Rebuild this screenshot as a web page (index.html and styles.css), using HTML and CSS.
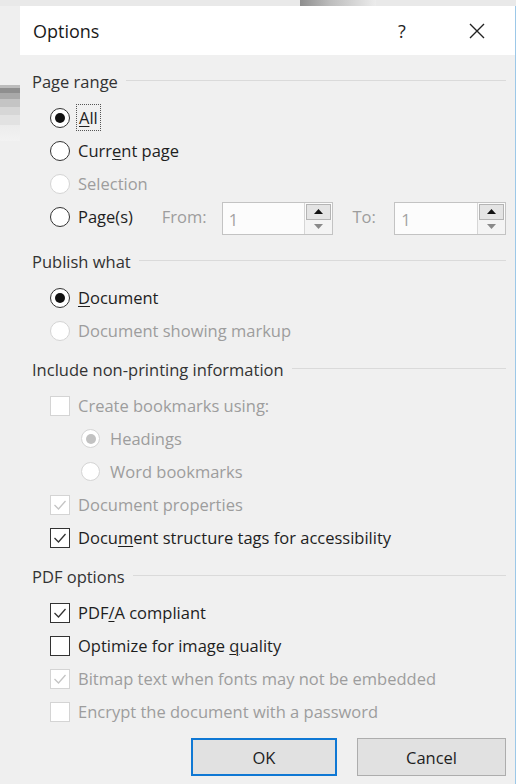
FILE: index.html
```html
<!DOCTYPE html>
<html lang="en">
<head>
<meta charset="utf-8">
<title>Options</title>
<link rel="stylesheet" href="styles.css">
</head>
<body>
<div class="desk">
  <div class="topstrip"></div>
  <div class="stage">
    <div class="gutter"></div>
    <div class="dialog">
      <div class="titlebar">
        <span class="title">Options</span>
        <span class="help">?</span>
        <span class="close">
          <svg width="18" height="18" viewBox="0 0 18 18"><path d="M2 2 L16 16 M16 2 L2 16" stroke="#222" stroke-width="1.4" fill="none"/></svg>
        </span>
      </div>

      <div class="content">
        <section class="group">
          <div class="group-head">Page range</div>
          <div class="opt"><span class="radio on"></span><span class="focus"><u>A</u>ll</span></div>
          <div class="opt"><span class="radio"></span><span>Curr<u>e</u>nt page</span></div>
          <div class="opt off"><span class="radio"></span><span>Selection</span></div>
          <div class="opt pages">
            <span class="radio"></span>
            <span class="pages-label">Pa<u>g</u>e(s)</span>
            <span class="field-label from">From:</span>
            <span class="spin">
              <span class="spin-value">1</span>
              <span class="spin-btns">
                <span class="spin-up"><svg width="9" height="5" viewBox="0 0 9 5"><path d="M0 5 L4.5 0 L9 5 Z" fill="#111"/></svg></span>
                <span class="spin-down"><svg width="9" height="5" viewBox="0 0 9 5"><path d="M0 0 L4.5 5 L9 0 Z" fill="#8a8a8a"/></svg></span>
              </span>
            </span>
            <span class="field-label to">To:</span>
            <span class="spin">
              <span class="spin-value">1</span>
              <span class="spin-btns">
                <span class="spin-up"><svg width="9" height="5" viewBox="0 0 9 5"><path d="M0 5 L4.5 0 L9 5 Z" fill="#111"/></svg></span>
                <span class="spin-down"><svg width="9" height="5" viewBox="0 0 9 5"><path d="M0 0 L4.5 5 L9 0 Z" fill="#8a8a8a"/></svg></span>
              </span>
            </span>
          </div>
        </section>

        <section class="group">
          <div class="group-head">Publish what</div>
          <div class="opt"><span class="radio on"></span><span><u>D</u>ocument</span></div>
          <div class="opt off"><span class="radio"></span><span>Document showing markup</span></div>
        </section>

        <section class="group">
          <div class="group-head">Include non-printing information</div>
          <div class="opt off"><span class="check"></span><span>Create bookmarks using:</span></div>
          <div class="opt sub off"><span class="radio on"></span><span>Headings</span></div>
          <div class="opt sub off"><span class="radio"></span><span>Word bookmarks</span></div>
          <div class="opt off"><span class="check on"><svg width="14" height="12" viewBox="0 0 14 12"><path d="M1.5 6 L5.5 10 L12.5 2" stroke="currentColor" stroke-width="1.3" fill="none"/></svg></span><span>Document properties</span></div>
          <div class="opt"><span class="check on"><svg width="14" height="12" viewBox="0 0 14 12"><path d="M1.5 6 L5.5 10 L12.5 2" stroke="currentColor" stroke-width="1.3" fill="none"/></svg></span><span>Docu<u>m</u>ent structure tags for accessibility</span></div>
        </section>

        <section class="group">
          <div class="group-head">PDF options</div>
          <div class="opt"><span class="check on"><svg width="14" height="12" viewBox="0 0 14 12"><path d="M1.5 6 L5.5 10 L12.5 2" stroke="currentColor" stroke-width="1.3" fill="none"/></svg></span><span>PDF<u>/</u>A compliant</span></div>
          <div class="opt"><span class="check"></span><span>Optimize for image <u>q</u>uality</span></div>
          <div class="opt off"><span class="check on"><svg width="14" height="12" viewBox="0 0 14 12"><path d="M1.5 6 L5.5 10 L12.5 2" stroke="currentColor" stroke-width="1.3" fill="none"/></svg></span><span>Bitmap text when fonts may not be embedded</span></div>
          <div class="opt off"><span class="check"></span><span>Encrypt the document with a password</span></div>
        </section>

        <div class="actions">
          <button class="btn default" type="button">OK</button>
          <button class="btn" type="button">Cancel</button>
        </div>
      </div>
    </div>
  </div>
</div>
</body>
</html>
```

FILE: styles.css
```css
html, body {
  margin: 0;
  padding: 0;
}

body {
  width: 516px;
  height: 784px;
  overflow: hidden;
  background: #ededed;
  font-family: "Open Sans", "Noto Sans", sans-serif;
  font-size: 16.5px;
  color: #1e1e1e;
}

/* desktop behind the dialog */
.topstrip {
  height: 6px;
  background:
    linear-gradient(to right, #8e8e8e, #bdbdbd 40%, #ececec) 300px 0 / 76px 100% no-repeat,
    #e9e9e9;
}

.stage {
  display: flex;
}

.gutter {
  width: 20px;
  flex: none;
  background:
    linear-gradient(to bottom,
      #bcbcbc 0, #bcbcbc 3px,
      #8f8f8f 3px, #8f8f8f 8px,
      #a9a9a9 8px, #a9a9a9 14px,
      #c4c4c4 14px, #c4c4c4 22px,
      #d6d6d6 22px, #d6d6d6 30px,
      #e2e2e2 30px, #e2e2e2 40px,
      #ececec 40px, #f2f2f2 56px) 0 79px / 20px 56px no-repeat,
    #efefef;
}

/* dialog window */
.dialog {
  width: 495px;
  height: 778px;
  background: #f0f0f0;
  border-right: 1px solid #9cc8e8;
}

.titlebar {
  height: 49px;
  background: #ffffff;
  display: flex;
  align-items: center;
  padding-left: 13px;
}

.title {
  font-size: 18px;
  color: #1a1a1a;
  flex: 1;
}

.help {
  font-size: 18px;
  color: #222;
  width: 14px;
  text-align: center;
  margin-right: 59px;
}

.close {
  display: flex;
  width: 18px;
  height: 18px;
  margin-right: 29px;
}

.content {
  padding: 13px 9px 0 12px;
}

.group + .group {
  margin-top: 9px;
}

.group-head {
  height: 26px;
  display: flex;
  align-items: center;
  gap: 8px;
  color: #333;
  margin-bottom: 7px;
}

.group-head::after {
  content: "";
  flex: 1;
  height: 1px;
  background: #dadada;
  margin-top: -2px;
}

.opt {
  height: 33px;
  display: flex;
  align-items: center;
  gap: 8px;
  padding-left: 18px;
  white-space: nowrap;
}

.opt.sub {
  padding-left: 49px;
  gap: 10px;
}

.opt.off {
  color: #9d9d9d;
}

.opt.pages {
  margin-bottom: 15px;
}

u {
  text-decoration-thickness: 1px;
  text-underline-offset: 2px;
}

.focus {
  outline: 1px dotted #555;
  outline-offset: 1px;
  padding: 0 1px;
}

/* radio buttons */
.radio {
  width: 18px;
  height: 18px;
  flex: none;
  border: 1px solid #333;
  border-radius: 50%;
  background: #fff;
  display: flex;
  align-items: center;
  justify-content: center;
}

.sub .radio {
  width: 17px;
  height: 17px;
}

.radio.on::after {
  content: "";
  width: 10px;
  height: 10px;
  border-radius: 50%;
  background: #111;
}

.off .radio {
  border-color: #d4d4d4;
}

.off .radio.on::after {
  background: #c2c2c2;
}

/* check boxes */
.check {
  width: 18px;
  height: 18px;
  flex: none;
  border: 1px solid #333;
  background: #fff;
  display: flex;
  align-items: center;
  justify-content: center;
  color: #333;
}

.off .check {
  border-color: #d4d4d4;
  color: #c4c4c4;
}

/* page range inputs */
.pages-label {
  width: 76px;
}

.field-label {
  color: #9d9d9d;
}

.field-label.from {
  width: 52px;
}

.field-label.to {
  width: 34px;
  margin-left: 11px;
}

.spin {
  width: 110px;
  height: 31px;
  border: 1px solid #c3c3c3;
  background: #fcfcfc;
  display: flex;
  margin-top: 3px;
}

.spin-value {
  flex: 1;
  color: #a3a3a3;
  padding-left: 6px;
  display: flex;
  align-items: center;
  padding-top: 3px;
}

.spin-btns {
  width: 27px;
  display: flex;
  flex-direction: column;
  border-left: 1px solid #d6d6d6;
}

.spin-up {
  height: 14px;
  margin: 1px 1px 0 1px;
  border: 1px solid #b4b4b4;
  background: #e4e4e4;
  display: flex;
  align-items: center;
  justify-content: center;
}

.spin-down {
  flex: 1;
  background: #f4f4f4;
  display: flex;
  align-items: center;
  justify-content: center;
}

/* dialog buttons */
.actions {
  display: flex;
  justify-content: flex-end;
  gap: 20px;
  margin-top: 10px;
}

.btn {
  height: 38px;
  font-family: inherit;
  font-size: 16.5px;
  color: #1e1e1e;
  background: #e1e1e1;
  border: 1px solid #adadad;
  padding: 0;
  width: 149px;
}

.btn.default {
  width: 146px;
  border: 2px solid #0f78d4;
}
```
